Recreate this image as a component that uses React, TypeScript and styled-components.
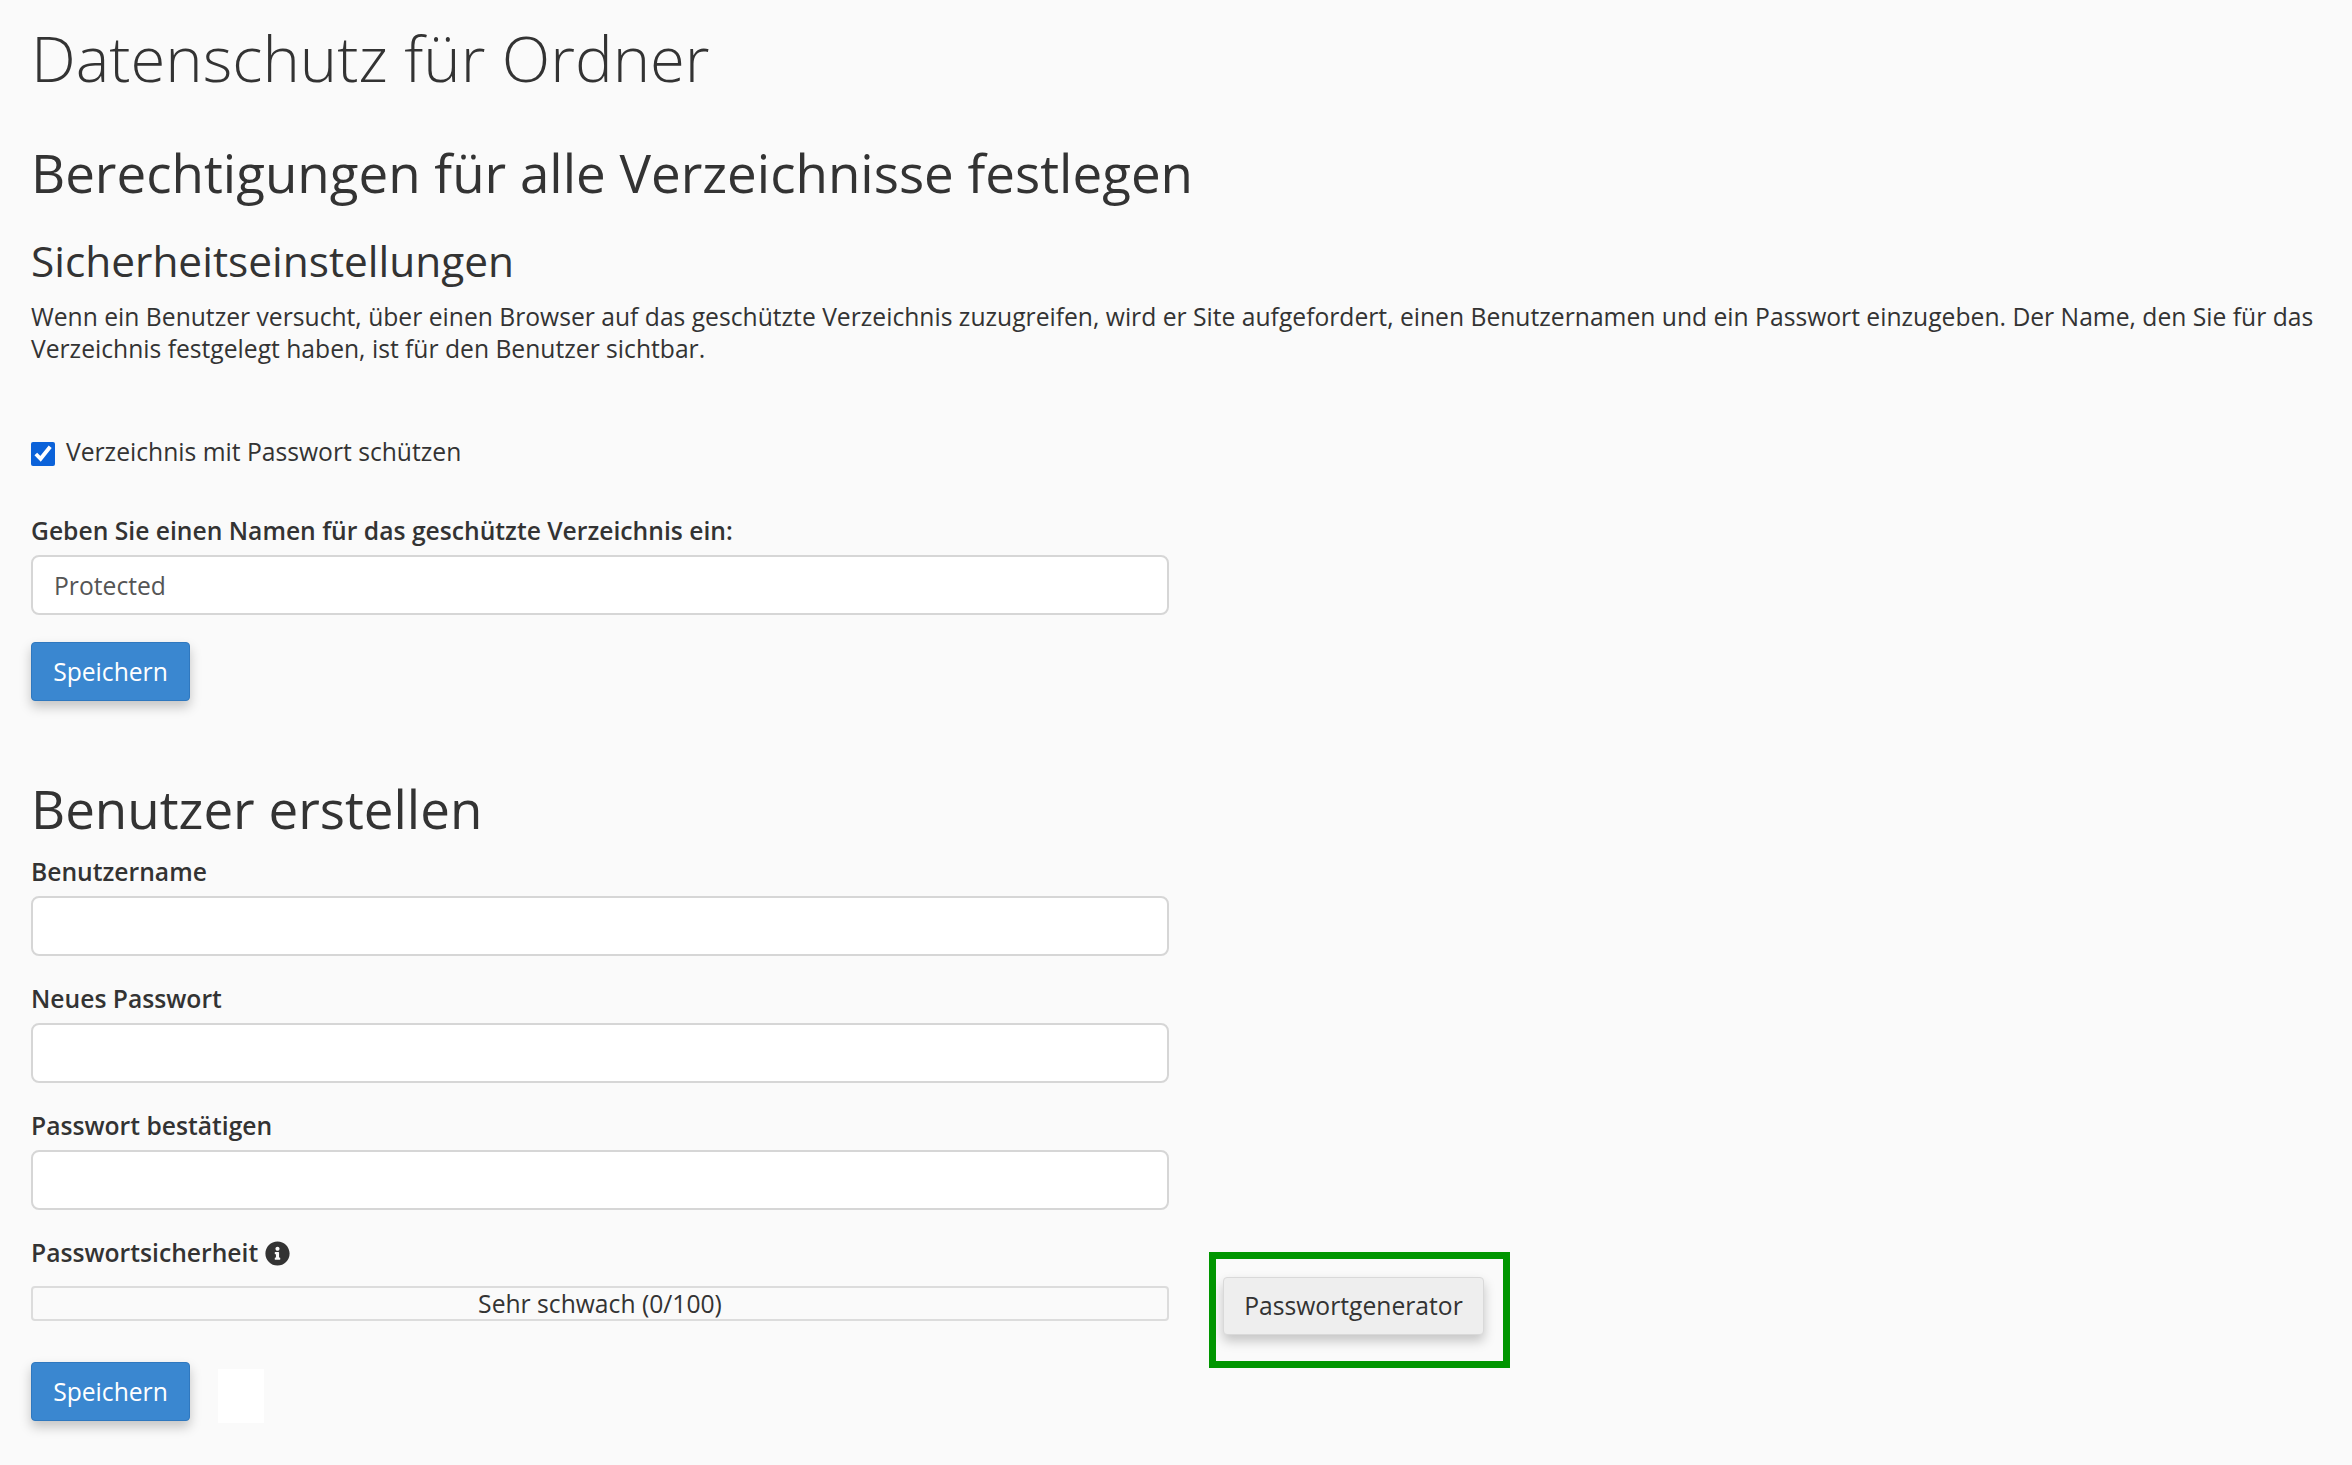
import React from "react";
import styled, { createGlobalStyle } from "styled-components";
import { FaInfoCircle } from "react-icons/fa";

const Global = createGlobalStyle`
  html, body { margin: 0; padding: 0; background: #fafafa; }
  body { font-family: "Open Sans", "Noto Sans", sans-serif; color: #333; font-size: 24.67px; line-height: 32px; }
`;

const Page = styled.main`
  width: 2352px;
  height: 1465px;
  box-sizing: border-box;
  padding: 23px 0 0 31px;
  overflow: hidden;
`;

const Title = styled.h1`
  margin: 0 0 50px;
  font-size: 63.4px;
  line-height: 70px;
  font-weight: 300;
`;

const SectionTitle = styled.h2<{ $top: number }>`
  margin: ${(p) => p.$top}px 0 0;
  font-size: 52.9px;
  line-height: 58px;
  font-weight: 400;
`;

const SubTitle = styled.h3`
  margin: 35px 0 0;
  font-size: 42.4px;
  line-height: 50px;
  font-weight: 400;
`;

const Paragraph = styled.p`
  margin: 15px 0 0;
  width: 2320px;
`;

const CheckRow = styled.label`
  display: flex;
  align-items: center;
  gap: 11px;
  margin-top: 71px;
  height: 32px;
`;

const Check = styled.input`
  width: 24px;
  height: 24px;
  margin: 4px 0 0;
  accent-color: #0b62d9;
`;

const FieldLabel = styled.label<{ $top: number }>`
  display: flex;
  align-items: center;
  gap: 7px;
  margin-top: ${(p) => p.$top}px;
  font-weight: 600;
  height: 32px;
`;

const TextInput = styled.input`
  display: block;
  width: 1138px;
  height: 60px;
  box-sizing: border-box;
  margin-top: 8px;
  padding: 0 21px;
  background: #fff;
  border: 2px solid #d6d6d6;
  border-radius: 8px;
  font: inherit;
  color: #555;
  outline: none;
`;

const PrimaryButton = styled.button<{ $top: number }>`
  display: block;
  width: 159px;
  height: 59px;
  margin-top: ${(p) => p.$top}px;
  padding: 0;
  background: #3a87d0;
  border: 1px solid #2f78bf;
  border-radius: 4px;
  box-shadow: 0 6px 12px rgba(0, 0, 0, 0.22);
  color: #fff;
  font: inherit;
`;

const Row = styled.div`
  display: flex;
  align-items: flex-start;
`;

const LeftColumn = styled.div`
  width: 1138px;
  flex: none;
`;

const Meter = styled.div`
  width: 1138px;
  height: 35px;
  box-sizing: border-box;
  margin-top: 17px;
  border: 2px solid #dcdcdc;
  border-radius: 4px;
  text-align: center;
  line-height: 31px;
`;

const SaveRow = styled.div`
  display: flex;
  align-items: flex-start;
  gap: 28px;
`;

const BlankBox = styled.div`
  width: 46px;
  height: 54px;
  margin-top: 48px;
  background: #fff;
`;

const Highlight = styled.div`
  width: 301px;
  height: 116px;
  box-sizing: border-box;
  margin: 42px 0 0 40px;
  padding: 18px 0 0 7px;
  border: 7px solid #009600;
`;

const SecondaryButton = styled.button`
  display: block;
  width: 261px;
  height: 58px;
  padding: 0;
  background: #eee;
  border: 1px solid #d9d9d9;
  border-radius: 4px;
  box-shadow: 0 6px 12px rgba(0, 0, 0, 0.22);
  color: #333;
  font: inherit;
`;

export default function App() {
  return (
    <Page>
      <Global />
      <Title>Datenschutz für Ordner</Title>
      <SectionTitle $top={0}>Berechtigungen für alle Verzeichnisse festlegen</SectionTitle>
      <SubTitle>Sicherheitseinstellungen</SubTitle>
      <Paragraph>
        Wenn ein Benutzer versucht, über einen Browser auf das geschützte Verzeichnis zuzugreifen, wird er Site aufgefordert, einen Benutzernamen und ein Passwort einzugeben. Der Name, den Sie für das Verzeichnis festgelegt haben, ist für den Benutzer sichtbar.
      </Paragraph>
      <CheckRow>
        <Check type="checkbox" defaultChecked />
        Verzeichnis mit Passwort schützen
      </CheckRow>
      <FieldLabel $top={47}>Geben Sie einen Namen für das geschützte Verzeichnis ein:</FieldLabel>
      <TextInput defaultValue="Protected" />
      <PrimaryButton $top={27}>Speichern</PrimaryButton>
      <SectionTitle $top={78}>Benutzer erstellen</SectionTitle>
      <FieldLabel $top={19}>Benutzername</FieldLabel>
      <TextInput />
      <FieldLabel $top={27}>Neues Passwort</FieldLabel>
      <TextInput />
      <FieldLabel $top={27}>Passwort bestätigen</FieldLabel>
      <TextInput />
      <Row>
        <LeftColumn>
          <FieldLabel $top={27}>
            Passwortsicherheit
            <FaInfoCircle size={25} color="#333" />
          </FieldLabel>
          <Meter>Sehr schwach (0/100)</Meter>
          <SaveRow>
            <PrimaryButton $top={41}>Speichern</PrimaryButton>
            <BlankBox />
          </SaveRow>
        </LeftColumn>
        <Highlight>
          <SecondaryButton>Passwortgenerator</SecondaryButton>
        </Highlight>
      </Row>
    </Page>
  );
}
